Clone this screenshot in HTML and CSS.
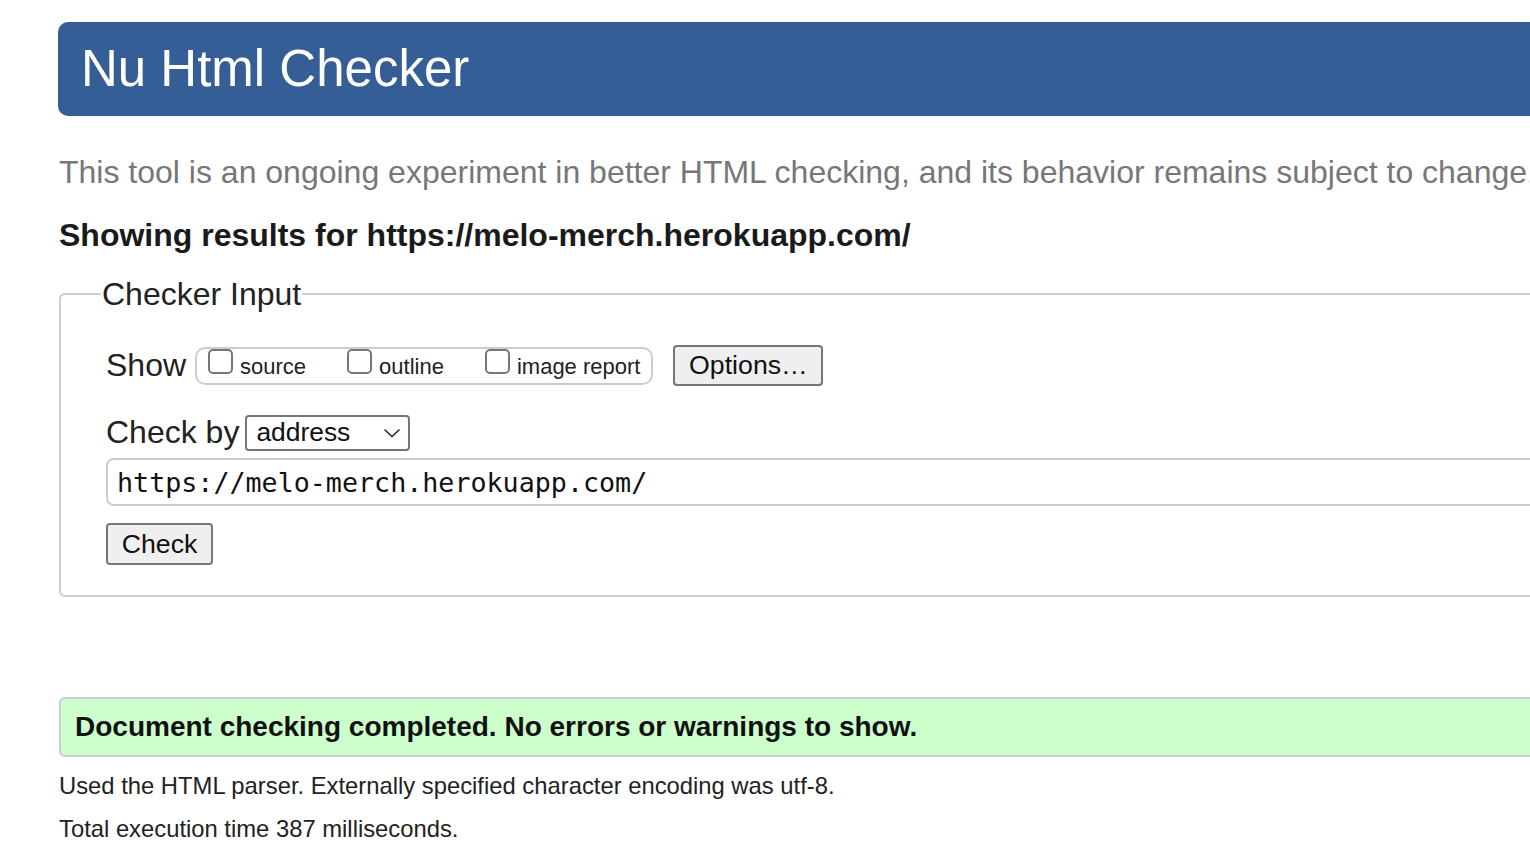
FILE: index.html
```html
<!DOCTYPE html>
<html>
<head>
<meta charset="utf-8">
<title>Nu Html Checker</title>
<link rel="stylesheet" href="styles.css">
</head>
<body>
<div class="page">
  <h1 class="banner">Nu Html Checker</h1>
  <p class="intro">This tool is an ongoing experiment in better HTML checking, and its behavior remains subject to change.</p>
  <p class="results-for">Showing results for https://melo-merch.herokuapp.com/</p>
  <fieldset class="checker">
    <legend class="checker-legend">Checker Input</legend>
    <div class="show-row">
      <span class="row-label">Show</span>
      <div class="show-group">
        <label class="opt"><span class="box"></span>source</label>
        <label class="opt"><span class="box"></span>outline</label>
        <label class="opt"><span class="box"></span>image report</label>
      </div>
      <span class="btn btn-options">Options…</span>
    </div>
    <div class="checkby-row">
      <span class="row-label">Check by</span>
      <span class="select">address<svg class="chev" width="18" height="10" viewBox="0 0 18 10"><path d="M1.5 1.5 L9 8.5 L16.5 1.5" fill="none" stroke="#222" stroke-width="1.5"/></svg></span>
    </div>
    <div class="url-input">https://melo-merch.herokuapp.com/</div>
    <div class="check-row"><span class="btn btn-check">Check</span></div>
  </fieldset>
  <div class="success">Document checking completed. No errors or warnings to show.</div>
  <p class="meta">Used the HTML parser. Externally specified character encoding was utf-8.</p>
  <p class="meta meta-second">Total execution time 387 milliseconds.</p>
</div>
</body>
</html>
```
FILE: styles.css
```css
html, body {
  margin: 0;
  padding: 0;
  overflow: hidden;
  background: #fff;
}
body {
  font-family: "Liberation Sans", Arial, sans-serif;
  color: #111;
}
.page {
  width: 1800px;
  padding-left: 58px;
  padding-top: 22px;
}
.banner {
  margin: 0;
  height: 94px;
  line-height: 94px;
  padding-left: 23px;
  background: #365e96;
  color: #fff;
  font-size: 51px;
  font-weight: normal;
  border-radius: 10px;
}
.intro {
  margin: 36px 0 0 1px;
  font-size: 32px;
  line-height: 40px;
  color: #777;
  white-space: nowrap;
}
.results-for {
  margin: 23px 0 0 1px;
  font-size: 32px;
  line-height: 40px;
  font-weight: bold;
  color: #1a1a1a;
  white-space: nowrap;
}
.checker {
  margin: 21px 0 0 1px;
  border: 2px solid #ccc;
  border-radius: 6px;
  padding: 0 0 30px 45px;
}
.checker-legend {
  font-size: 32px;
  line-height: 36px;
  padding: 0 1px;
  margin-left: -5px;
  color: #222;
}
.show-row {
  display: flex;
  align-items: center;
  margin-top: 33px;
}
.row-label {
  font-size: 32px;
  line-height: 37px;
  color: #222;
}
.show-group {
  display: flex;
  align-items: flex-start;
  margin-left: 9px;
  height: 38px;
  box-sizing: border-box;
  border: 2px solid #ccc;
  border-radius: 10px;
  padding: 0 11px;
  gap: 41px;
}
.opt {
  font-size: 22px;
  line-height: 36px;
  color: #222;
  white-space: nowrap;
}
.box {
  display: inline-block;
  vertical-align: baseline;
  width: 25px;
  height: 25px;
  border: 2px solid #777;
  border-radius: 5px;
  box-sizing: border-box;
  margin-right: 7px;
}
.btn {
  display: inline-flex;
  align-items: center;
  justify-content: center;
  background: #efefef;
  border: 2px solid #767676;
  border-radius: 4px;
  color: #111;
  box-sizing: border-box;
}
.btn-options {
  margin-left: 20px;
  width: 150px;
  height: 41px;
  font-size: 26.7px;
}
.checkby-row {
  display: flex;
  align-items: center;
  margin-top: 28px;
}
.select {
  margin-left: 6px;
  width: 165px;
  height: 36px;
  box-sizing: border-box;
  border: 2px solid #767676;
  border-radius: 4px;
  display: flex;
  align-items: center;
  justify-content: space-between;
  padding: 0 7px 0 9px;
  font-size: 26.4px;
  color: #111;
}
.url-input {
  margin-top: 7px;
  height: 48px;
  box-sizing: border-box;
  border: 2px solid #ccc;
  border-radius: 8px;
  display: flex;
  align-items: center;
  padding-left: 9px;
  font-family: "DejaVu Sans Mono", "Liberation Mono", monospace;
  font-size: 26.7px;
  color: #111;
}
.check-row {
  margin-top: 17px;
  display: flex;
}
.btn-check {
  width: 107px;
  height: 42px;
  font-size: 26.7px;
}
.success {
  margin: 100px 0 0 1px;
  height: 60px;
  box-sizing: border-box;
  border: 2px solid #ccc;
  border-radius: 6px;
  background: #ccffcc;
  display: flex;
  align-items: center;
  padding-left: 14px;
  font-size: 28px;
  font-weight: bold;
  color: #111;
  white-space: nowrap;
}
.meta {
  margin: 13px 0 0 1px;
  font-size: 23.8px;
  line-height: 32px;
  color: #222;
}
.meta-second {
  margin-top: 11px;
}
```
